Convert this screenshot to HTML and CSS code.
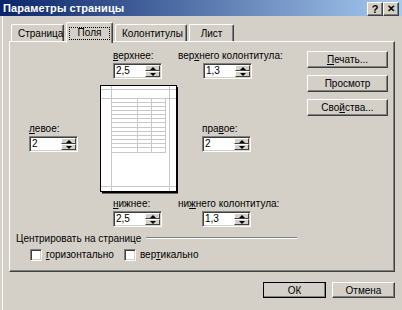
FILE: index.html
```html
<!DOCTYPE html>
<html lang="ru">
<head>
  <meta charset="UTF-8" />
  <title>Параметры страницы</title>
  <link rel="stylesheet" href="styles.css">
</head>
<body>
<div class="window">
  <div class="titlebar">
    <span class="title">Параметры страницы</span>
    <div class="title-btns">
      <span class="tbtn">?</span>
      <span class="tbtn close">✕</span>
    </div>
  </div>

  <div class="frame">
    <div class="tabs">
      <span class="tab">Страница</span>
      <span class="tab active"><span class="focus">Поля</span></span>
      <span class="tab">Колонтитулы</span>
      <span class="tab">Лист</span>
    </div>

    <div class="panel">
      <div class="top">
        <div class="fields">
          <div class="field f-top">
            <label><u>в</u>ерхнее:</label>
            <div class="spin"><span class="val">2,5</span><span class="arrows"><i class="up"></i><i class="dn"></i></span></div>
          </div>
          <div class="field f-head">
            <label>вер<u>х</u>него колонтитула:</label>
            <div class="spin"><span class="val">1,3</span><span class="arrows"><i class="up"></i><i class="dn"></i></span></div>
          </div>

          <div class="field f-left">
            <label><u>л</u>евое:</label>
            <div class="spin"><span class="val">2</span><span class="arrows"><i class="up"></i><i class="dn"></i></span></div>
          </div>
          <div class="preview">
            <svg width="79" height="109" viewBox="0 0 79 109">
              <rect x="0.5" y="0.5" width="76" height="106" fill="#fff" stroke="#000"/>
              <path d="M77 2v106M2 107.5h76" stroke="#000" stroke-width="2"/>
              <g stroke="#c8c8c8" stroke-width="1">
                <path d="M1 4.5h75M1 13.5h75M1 101.5h75M11.5 1v105M69.5 1v105"/>
                <path d="M37.5 13v54M51.5 13v54M65.5 13v54"/>
                <path d="M11 17.5h55M11 21.5h55M11 25.5h55M11 29.5h55M11 33.5h55M11 37.5h55M11 42.5h55M11 46.5h55M11 50.5h55M11 54.5h55M11 58.5h55M11 62.5h55M11 67.5h55"/>
              </g>
            </svg>
          </div>
          <div class="field f-right">
            <label>пра<u>в</u>ое:</label>
            <div class="spin"><span class="val">2</span><span class="arrows"><i class="up"></i><i class="dn"></i></span></div>
          </div>

          <div class="field f-bottom">
            <label><u>н</u>ижнее:</label>
            <div class="spin"><span class="val">2,5</span><span class="arrows"><i class="up"></i><i class="dn"></i></span></div>
          </div>
          <div class="field f-foot">
            <label>ни<u>ж</u>него колонтитула:</label>
            <div class="spin"><span class="val">1,3</span><span class="arrows"><i class="up"></i><i class="dn"></i></span></div>
          </div>
        </div>

        <div class="side">
          <button class="btn"><u>П</u>ечать...</button>
          <button class="btn">Просмотр</button>
          <button class="btn">Сво<u>й</u>ства...</button>
        </div>
      </div>

      <div class="group">
        <div class="group-head"><span>Центрировать на странице</span><span class="line"></span></div>
        <div class="checks">
          <span class="check"><span class="box"></span><span><u>г</u>оризонтально</span></span>
          <span class="check"><span class="box"></span><span>вер<u>т</u>икально</span></span>
        </div>
      </div>
    </div>

    <div class="actions">
      <button class="btn wide">ОК</button>
      <button class="btn wide">Отмена</button>
    </div>
  </div>
</div>
</body>
</html>
```

FILE: styles.css
```css
html, body {
  margin: 0;
  background-color: #d4d0c8;
  font-family: "Liberation Sans", Arial, sans-serif;
  font-size: 10px;
  color: #000;
}

.window {
  width: 402px;
  height: 310px;
  box-sizing: border-box;
  overflow: hidden;
}

.titlebar {
  height: 16px;
  display: flex;
  align-items: center;
  justify-content: space-between;
  padding-left: 3px;
  background: linear-gradient(to right, #0a246a, #a6caf0);
}

.title {
  font-size: 11px;
  font-weight: bold;
  color: #fff;
  letter-spacing: 0.1px;
}

.title-btns {
  display: flex;
  margin-right: 3px;
  margin-top: 2px;
}

.tbtn {
  width: 16px;
  height: 14px;
  box-sizing: border-box;
  background-color: #d4d0c8;
  border: 1px solid;
  border-color: #fff #404040 #404040 #fff;
  box-shadow: inset -1px -1px 0 #808080;
  font-size: 11px;
  font-weight: bold;
  line-height: 12px;
  text-align: center;
}

.tbtn.close {
  font-size: 10px;
}

.frame {
  height: 292px;
  margin-left: 2px;
  border-left: 1px solid #fff;
  border-bottom: 1px solid #404040;
  box-shadow: inset 0 -1px 0 #808080;
  padding-left: 6px;
  padding-top: 6px;
}

.tabs {
  display: flex;
  align-items: flex-end;
  height: 19px;
  padding-left: 2px;
}

.tab {
  height: 17px;
  box-sizing: border-box;
  padding: 3px 6px 0;
  margin-right: 2px;
  border: 1px solid;
  border-color: #fff #404040 transparent #fff;
  border-bottom: none;
  border-radius: 2px 2px 0 0;
  box-shadow: inset -1px 0 0 #808080;
  white-space: nowrap;
}

.tab:nth-child(1) { width: 53px; text-align: center; }
.tab:nth-child(3) { width: 72px; text-align: center; }
.tab:nth-child(4) { width: 45px; text-align: center; }

.tab.active {
  height: 21px;
  width: 47px;
  padding: 5px 3px 0;
  margin-bottom: -2px;
  position: relative;
  z-index: 1;
  background-color: #d4d0c8;
}

.tab .focus {
  display: block;
  height: 11px;
  line-height: 10px;
  padding: 0 3px;
  outline: 1px dotted #000;
  text-align: center;
}

.panel {
  width: 386px;
  height: 231px;
  box-sizing: border-box;
  border: 1px solid;
  border-color: #fff #404040 #404040 #fff;
  box-shadow: inset -1px -1px 0 #808080;
}

.top {
  display: flex;
  padding: 8px 0 0 19px;
}

.fields {
  display: grid;
  grid-template-columns: 71px 78px 104px;
  grid-template-rows: auto 109px auto;
  row-gap: 6px;
}

.field label {
  display: block;
  height: 11px;
  line-height: 11px;
  margin-bottom: 2px;
  white-space: nowrap;
}

.f-top { grid-column: 2; margin-left: 13px; }
.f-head { grid-column: 3; }
.f-head .spin { margin-left: 25px; }
.f-left { grid-column: 1; grid-row: 2; align-self: center; margin-top: -4px; }
.preview { grid-column: 2; grid-row: 2; line-height: 0; }
.f-right { grid-column: 3; grid-row: 2; align-self: center; margin-left: 24px; margin-top: -4px; }
.f-bottom { grid-column: 2; grid-row: 3; margin-left: 13px; }
.f-foot { grid-column: 3; grid-row: 3; }
.f-foot .spin { margin-left: 24px; }
.f-bottom label, .f-foot label { margin-top: -2px; }

.spin {
  width: 49px;
  height: 16px;
  box-sizing: border-box;
  display: flex;
  background-color: #fff;
  border: 1px solid;
  border-color: #808080 #fff #fff #808080;
  box-shadow: inset 1px 1px 0 #404040, inset -1px -1px 0 #d4d0c8;
  padding: 1px 1px 1px 2px;
}

.spin .val {
  flex: 1;
  line-height: 12px;
  font-size: 10px;
}

.arrows {
  width: 15px;
  display: flex;
  flex-direction: column;
}

.arrows i {
  flex: 1;
  background-color: #d4d0c8;
  border: 1px solid;
  border-color: #fff #404040 #404040 #fff;
  position: relative;
}

.arrows i::after {
  content: "";
  position: absolute;
  left: 4px;
  border-left: 3px solid transparent;
  border-right: 3px solid transparent;
}

.arrows i.up::after {
  top: 1px;
  border-bottom: 3px solid #000;
}

.arrows i.dn::after {
  top: 1px;
  border-top: 3px solid #000;
}

.side {
  display: flex;
  flex-direction: column;
  gap: 7px;
  margin-left: auto;
  margin-right: 6px;
  margin-top: 1px;
}

.btn {
  width: 81px;
  height: 17px;
  padding: 0;
  font-family: inherit;
  font-size: 10px;
  color: #000;
  background-color: #d4d0c8;
  border: 1px solid;
  border-color: #fff #404040 #404040 #fff;
  box-shadow: inset -1px -1px 0 #808080;
  border-radius: 0;
}

.group {
  margin: 5px 0 0 6px;
  width: 281px;
}

.group-head {
  display: flex;
  align-items: center;
  height: 12px;
  gap: 5px;
}

.group-head .line {
  flex: 1;
  border-top: 1px solid #808080;
  border-bottom: 1px solid #fff;
}

.checks {
  display: flex;
  gap: 10px;
  margin-top: 5px;
  padding-left: 14px;
}

.check {
  display: flex;
  align-items: center;
  gap: 4px;
  line-height: 12px;
}

.box {
  width: 12px;
  height: 12px;
  box-sizing: border-box;
  background-color: #fff;
  border: 1px solid;
  border-color: #808080 #fff #fff #808080;
  box-shadow: inset 1px 1px 0 #404040, inset -1px -1px 0 #d4d0c8;
}

.actions {
  display: flex;
  justify-content: flex-end;
  gap: 6px;
  width: 386px;
  margin-top: 10px;
}

.btn.wide {
  width: 63px;
  height: 16px;
}

.actions .btn:first-child {
  outline: 1px solid #000;
  outline-offset: -1px;
}
```
